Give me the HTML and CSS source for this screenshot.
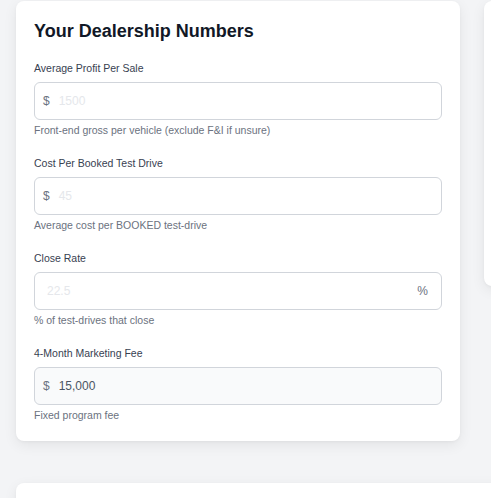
FILE: index.html
```html
<!DOCTYPE html>
<html>
<head>
<meta charset="utf-8">
<link rel="stylesheet" href="styles.css">
</head>
<body>
<div class="page">
  <div class="grid">
    <section class="card main">
      <h2 class="title">Your Dealership Numbers</h2>
      <div class="field">
        <label class="label">Average Profit Per Sale</label>
        <div class="input"><span class="prefix">$</span><span class="ph">1500</span></div>
        <div class="help">Front-end gross per vehicle (exclude F&amp;I if unsure)</div>
      </div>
      <div class="field">
        <label class="label">Cost Per Booked Test Drive</label>
        <div class="input"><span class="prefix">$</span><span class="ph">45</span></div>
        <div class="help">Average cost per BOOKED test-drive</div>
      </div>
      <div class="field">
        <label class="label">Close Rate</label>
        <div class="input pct"><span class="ph">22.5</span><span class="suffix">%</span></div>
        <div class="help">% of test-drives that close</div>
      </div>
      <div class="field">
        <label class="label">4-Month Marketing Fee</label>
        <div class="input readonly"><span class="prefix">$</span><span class="val">15,000</span></div>
        <div class="help">Fixed program fee</div>
      </div>
    </section>
    <section class="card side"></section>
  </div>
  <section class="card bottom"></section>
</div>
</body>
</html>
```
FILE: styles.css
```css
html, body { margin: 0; padding: 0; }
html { overflow: hidden; }
body {
  background: #f3f4f6;
  font-family: "Liberation Sans", Arial, sans-serif;
  overflow: hidden;
  width: 491px;
  height: 498px;
}
.page {
  width: 475px;
  height: 497px;
  overflow: hidden;
  padding: 1px 0 0 16px;
}
.grid {
  display: grid;
  grid-template-columns: 444px 444px;
  column-gap: 24px;
  align-items: start;
}
.card {
  background: #fff;
  border-radius: 8px;
  box-shadow: 0 4px 14px rgba(0, 0, 0, 0.07), 0 1px 3px rgba(0, 0, 0, 0.04);
}
.main {
  padding: 18px 18px 18px 18px;
}
.side {
  height: 285px;
}
.bottom {
  margin-top: 42px;
  height: 200px;
  width: 912px;
}
.title {
  margin: 0 0 17px 0;
  font-size: 18px;
  line-height: 24px;
  font-weight: 700;
  color: #111827;
}
.field {
  display: flex;
  flex-direction: column;
  margin-bottom: 17px;
}
.field:last-child { margin-bottom: 0; }
.label {
  font-size: 10.5px;
  line-height: 16px;
  color: #374151;
  margin-bottom: 6px;
}
.input {
  height: 38px;
  box-sizing: border-box;
  border: 1px solid #d1d5db;
  border-radius: 6px;
  display: flex;
  align-items: center;
  padding: 0 13px 0 8px;
  font-size: 12px;
}
.input.pct { padding-left: 12px; justify-content: space-between; }
.input.readonly { background: #f9fafb; }
.prefix { color: #6b7280; margin-right: 9px; }
.suffix { color: #6b7280; }
.ph { color: #e5e7eb; }
.val { color: #4b5563; }
.help {
  margin-top: 2px;
  font-size: 10.5px;
  line-height: 16px;
  color: #6b7280;
}
```
